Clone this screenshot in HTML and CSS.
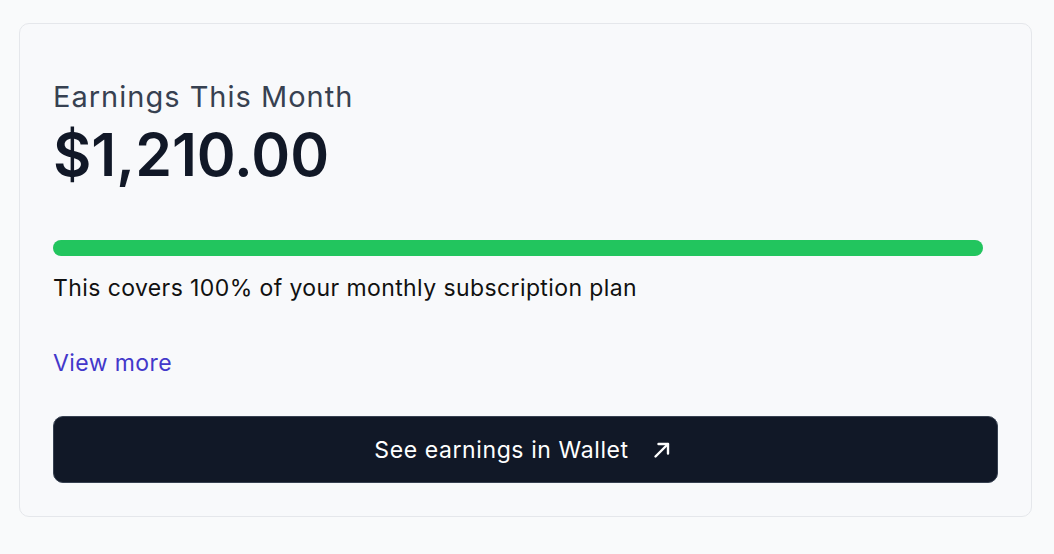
FILE: index.html
```html
<!DOCTYPE html>
<html lang="en">
<head>
    <meta charset="UTF-8">
    <meta name="viewport" content="width=device-width, initial-scale=1.0">
    <title>Earnings</title>
    <link rel="stylesheet" href="styles.css">
</head>
<body>
    <div class="card">
        <div class="card-title">Earnings This Month</div>
        <div class="amount">$1,210.00</div>

        <div class="progress">
            <div class="progress-fill" style="width: 100%;"></div>
        </div>
        <p class="note">This covers 100% of your monthly subscription plan</p>

        <a class="view-more" href="#">View more</a>

        <button class="wallet-btn">
            <span>See earnings in Wallet</span>
            <svg class="arrow" width="18" height="18" viewBox="0 0 18 18" fill="none" stroke="currentColor" stroke-width="2.4" stroke-linecap="round" stroke-linejoin="round">
                <path d="M2.5 15.5 L15 3"/>
                <path d="M5.5 3 H15 V12.5"/>
            </svg>
        </button>
    </div>
</body>
</html>
```

FILE: styles.css
```css
body {
    margin: 0;
    background: #f9fafb;
    font-family: Inter, "Noto Sans", sans-serif;
}

.card {
    margin: 23px 22px 0 19px;
    padding: 56px 33px 33px 33px;
    background: #f8f9fb;
    border: 1px solid #e5e7eb;
    border-radius: 10px;
}

.card-title {
    font-size: 29px;
    line-height: 34px;
    letter-spacing: 1px;
    color: #374151;
}

.amount {
    margin-top: 6px;
    font-size: 59px;
    line-height: 70px;
    font-weight: 600;
    color: #111827;
}

.progress {
    margin-top: 50px;
    margin-right: 15px;
    height: 16px;
    border-radius: 8px;
    background: #e5e7eb;
}

.progress-fill {
    height: 100%;
    border-radius: 8px;
    background: #22c55e;
}

.note {
    margin: 17px 0 0 0;
    font-size: 23px;
    line-height: 30px;
    letter-spacing: 0.4px;
    color: #111111;
}

.view-more {
    display: block;
    margin-top: 45px;
    font-size: 23px;
    line-height: 30px;
    letter-spacing: 0.4px;
    color: #4338ca;
    text-decoration: none;
}

.wallet-btn {
    display: flex;
    align-items: center;
    justify-content: center;
    gap: 24px;
    width: 100%;
    height: 67px;
    margin-top: 38px;
    padding: 0 6px 0 0;
    background: #111827;
    color: #ffffff;
    border: 1px solid #374151;
    border-radius: 10px;
    font-family: inherit;
    font-size: 23px;
    letter-spacing: 0.6px;
    cursor: pointer;
}

.arrow {
    display: block;
}
```
